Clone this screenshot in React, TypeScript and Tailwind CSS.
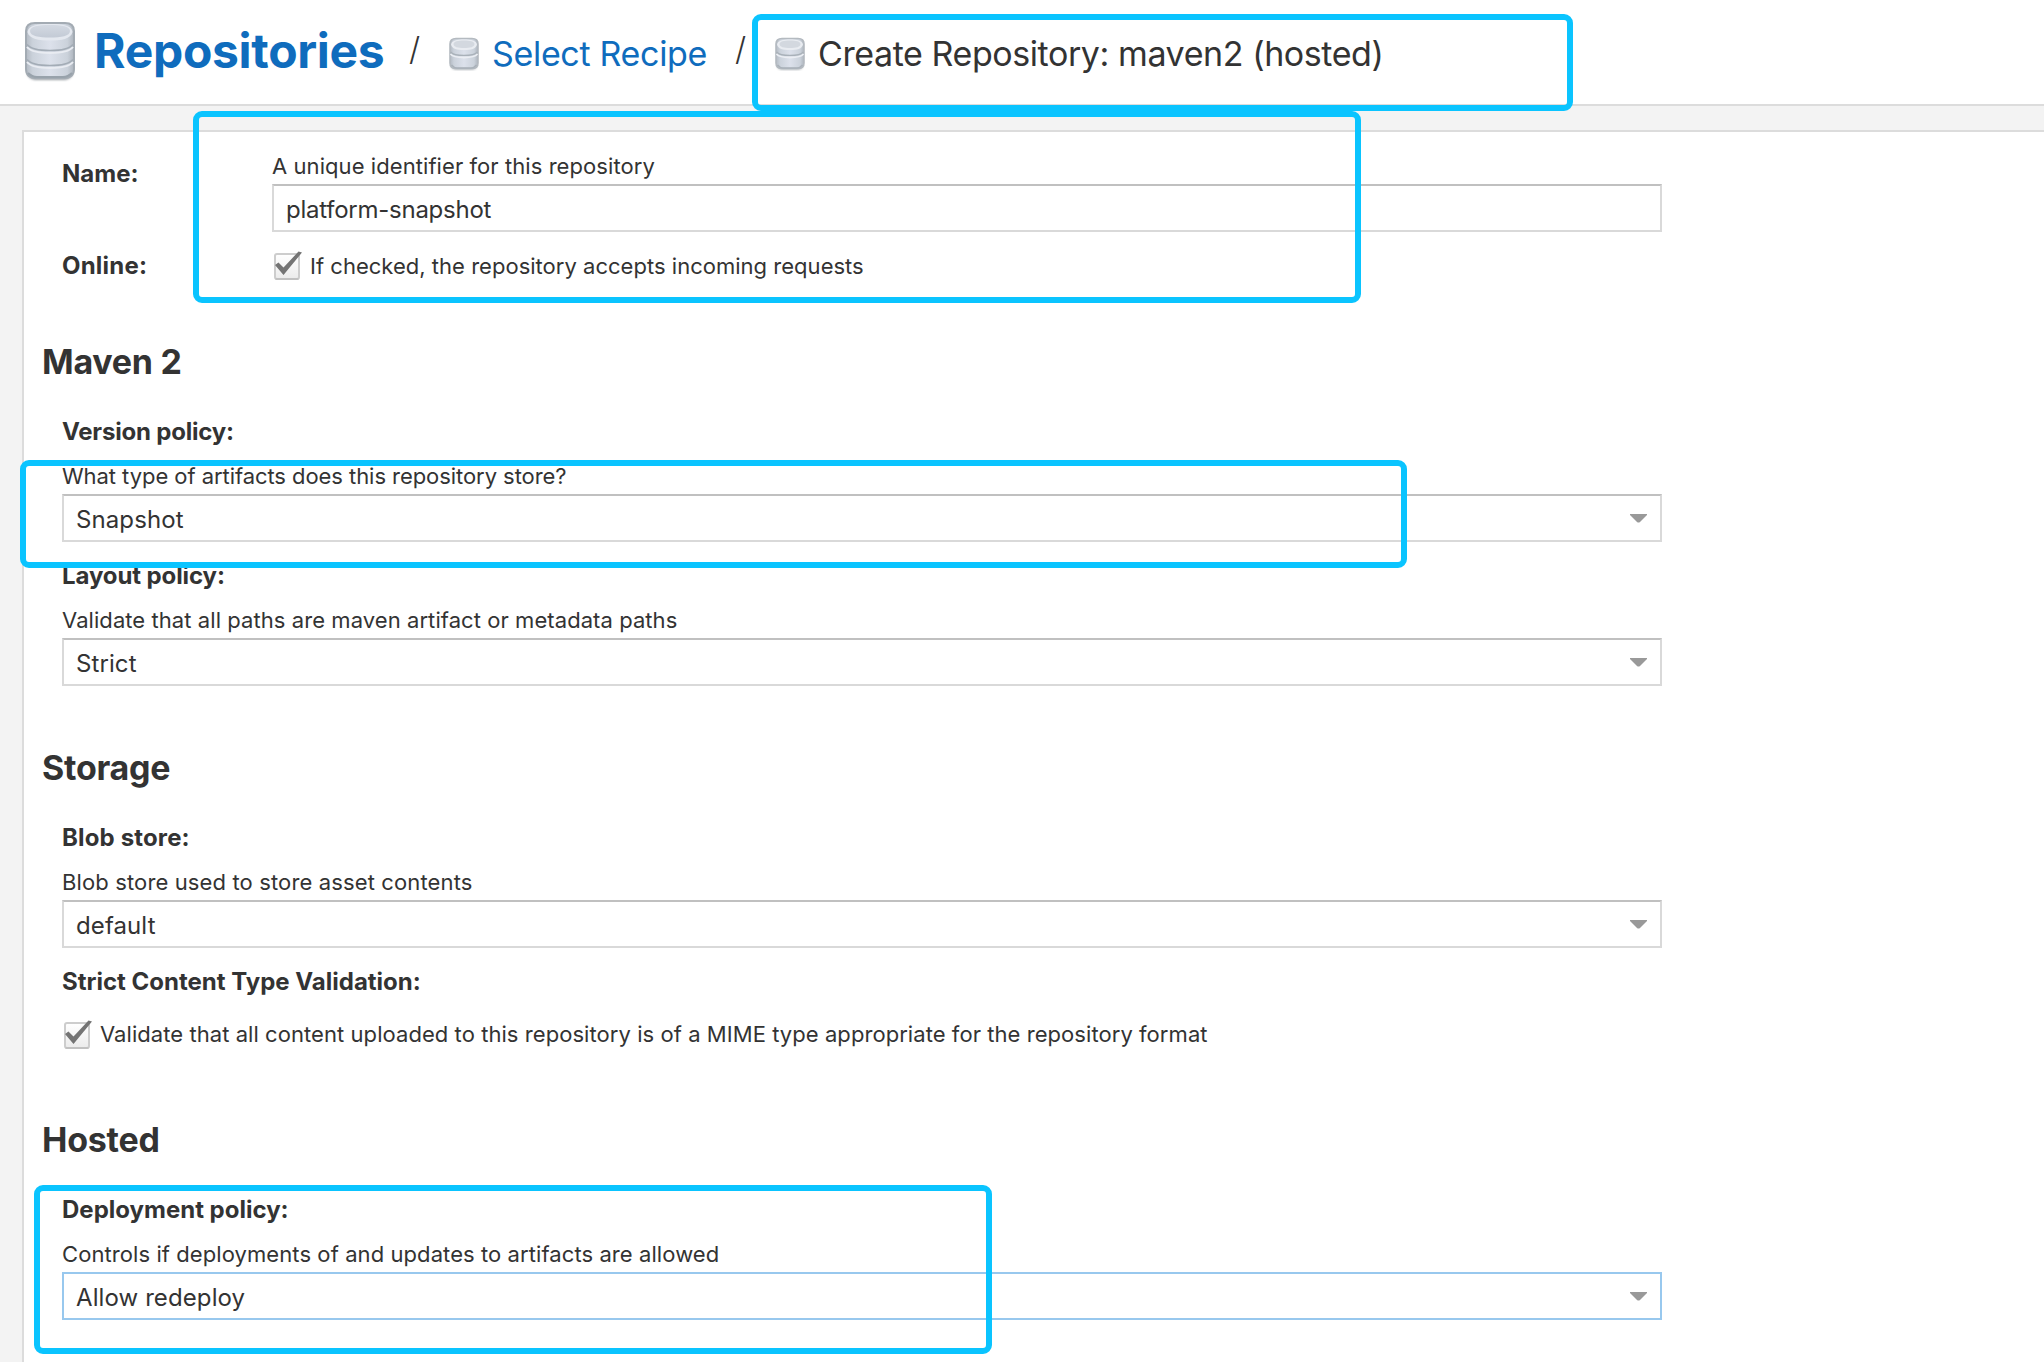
import type { ReactNode } from 'react';

function DatabaseLarge() {
  return (
    <svg className="ml-6 mt-5 h-[62px] w-[52px] shrink-0" viewBox="0 0 52 62" fill="none">
      <defs>
        <linearGradient id="dbBody" x1="0" x2="1" y1="0" y2="0">
          <stop offset="0" stopColor="#b3bac3" />
          <stop offset="0.14" stopColor="#cbd2db" />
          <stop offset="0.5" stopColor="#dce1eb" />
          <stop offset="0.86" stopColor="#cbd2db" />
          <stop offset="1" stopColor="#aeb5be" />
        </linearGradient>
        <linearGradient id="dbTop" x1="0" x2="0" y1="0" y2="1">
          <stop offset="0" stopColor="#d3d9e2" />
          <stop offset="1" stopColor="#c3cad5" />
        </linearGradient>
        <filter id="dbShadow" x="-20%" y="-20%" width="140%" height="150%">
          <feGaussianBlur stdDeviation="1.3" />
        </filter>
      </defs>
      <path d="M3 51q0 8 8 9h30q8-1 8-9z" fill="#6f7780" opacity="0.7" filter="url(#dbShadow)" />
      <path d="M2 11Q2 3 11 3H41Q50 3 50 11V49Q50 58 40 58H12Q2 58 2 49Z" fill="url(#dbBody)" stroke="#a3abb3" strokeWidth="2" />
      <path d="M3.500 12C5 19 15 20.500 26 20.500S47 19 48.500 12C48 5 38 4 26 4S4 5 3.500 12Z" fill="#e4e8ef" />
      <path d="M6 11C6 16 15 17.500 26 17.500S46 16 46 11C46 6.500 38 5 26 5S6 6.500 6 11Z" fill="url(#dbTop)" />
      <path d="M3 24.500C7 29.500 15 30.500 26 30.500S45 29.500 49 24.500" stroke="#a3acb6" strokeWidth="1.600" />
      <path d="M3 27C7 32 15 33 26 33S45 32 49 27" stroke="#e9ecf2" strokeWidth="2" />
      <path d="M3 39.500C7 44.500 15 45.500 26 45.500S45 44.500 49 39.500" stroke="#a3acb6" strokeWidth="1.600" />
      <path d="M3 42C7 47 15 48 26 48S45 47 49 42" stroke="#e9ecf2" strokeWidth="2" />
      <path d="M4 53Q8 57 13 57H39Q44 57 48 53" stroke="#98a2ab" strokeWidth="2" />
    </svg>
  );
}

function DatabaseSmall() {
  return (
    <svg className="mt-[37px] h-[34px] w-[30px] shrink-0" viewBox="0 0 30 34" fill="none">
      <path d="M2 28q0 4.500 5 5h16q5-.5 5-5z" fill="#8d949b" opacity="0.6" filter="url(#dbShadow)" />
      <path d="M1 7Q1 1.500 7 1.500H23Q29 1.500 29 7V26Q29 31.500 23 31.500H7Q1 31.500 1 26Z" fill="url(#dbBody)" stroke="#b4bac0" strokeWidth="1.600" />
      <path d="M2 7.500C3 12 8 13 15 13S27 12 28 7.500C27.500 3.500 22 2.500 15 2.500S2.500 3.500 2 7.500Z" fill="#e9ecf1" />
      <path d="M4.500 7C4.500 10 9 11 15 11S25.500 10 25.500 7C25.500 4.500 21 3.500 15 3.500S4.500 4.500 4.500 7Z" fill="#d3d8df" />
      <path d="M1.500 15C4 18 9 18.500 15 18.500S26 18 28.500 15" stroke="#a9b1b9" strokeWidth="1.500" />
      <path d="M1.500 17C4 20 9 20.500 15 20.500S26 20 28.500 17" stroke="#ebeef3" strokeWidth="1.800" />
      <path d="M2.500 28Q5 31 8 31H22Q25 31 27.500 28" stroke="#a9b1b9" strokeWidth="1.500" />
    </svg>
  );
}

function Checkbox() {
  return (
    <svg className="ml-px mt-[2px] h-[30px] w-[30px] shrink-0" viewBox="0 0 30 30" fill="none">
      <defs>
        <linearGradient id="cbFill" x1="0" x2="0" y1="0" y2="1">
          <stop offset="0" stopColor="#ffffff" />
          <stop offset="1" stopColor="#ebebeb" />
        </linearGradient>
      </defs>
      <rect x="2" y="3" width="24" height="25" rx="2" fill="url(#cbFill)" stroke="#cdcdcd" strokeWidth="2" />
      <path d="M3 28H25" stroke="#bdbdbd" strokeWidth="1.500" strokeLinecap="round" />
      <path d="M2 14L5.500 11.500L10.500 16.500L25.500 0.500L29 1.500L10.500 24Z" fill="#747474" />
    </svg>
  );
}

function Arrow() {
  return (
    <svg className="mr-[13px] h-[9px] w-[17px]" viewBox="0 0 17 9">
      <path d="M0 0H17V1L10 8Q8.500 9.200 7 8L0 1Z" fill="#999999" />
    </svg>
  );
}

function Slash({ className }: { className: string }) {
  return <span className={`mt-[31px] text-[32px] font-light leading-9 ${className}`}>/</span>;
}

function Heading({ children, className }: { children: ReactNode; className: string }) {
  return <h2 className={`pl-[18px] text-[34px] font-bold leading-10 tracking-[-0.25px] ${className}`}>{children}</h2>;
}

function Label({ children, className = '' }: { children: ReactNode; className?: string }) {
  return <div className={`text-2xl font-bold leading-8 ${className}`}>{children}</div>;
}

function Help({ children, className = 'tracking-[0.07px]' }: { children: ReactNode; className?: string }) {
  return <div className={`text-[22px] leading-8 ${className}`}>{children}</div>;
}

function Select({ value, focused = false }: { value: string; focused?: boolean }) {
  return (
    <div
      className={`mt-[2px] flex h-12 w-[1600px] items-center justify-between border-2 pl-3 text-2xl tracking-[0.1px] ${
        focused ? 'border-[#98c8ee]' : 'border-[#d9d9d9] border-t-[#c0c0c0]'
      }`}
    >
      <span className="pt-1 leading-8">{value}</span>
      <Arrow />
    </div>
  );
}

type FieldProps = {
  label: string;
  labelClass?: string;
  help: string;
  helpClass?: string;
  value: string;
  focused?: boolean;
};

function Field({ label, labelClass = '', help, helpClass, value, focused }: FieldProps) {
  return (
    <div>
      <Label className={`mb-3 ${labelClass}`}>{label}</Label>
      <Help className={helpClass}>{help}</Help>
      <Select value={value} focused={focused} />
    </div>
  );
}

function Highlight({ className }: { className: string }) {
  return <div className={`absolute rounded-[9px] border-6 border-[#0ac4ff] ${className}`} />;
}

export default function App() {
  return (
    <div className="relative flex h-[1362px] w-[2044px] flex-col overflow-hidden bg-[#f3f3f3] font-['Inter',sans-serif] text-[#333333]">
      <header className="flex h-[106px] shrink-0 items-start whitespace-nowrap border-b-2 border-[#dcdcdc] bg-white">
        <DatabaseLarge />
        <h1 className="ml-[18px] mt-[23px] w-[315px] text-5xl font-bold leading-[56px] tracking-[-0.3px] text-[#0f6cbd]">Repositories</h1>
        <Slash className="w-10" />
        <DatabaseSmall />
        <a className="ml-[13px] mt-[34px] w-[243px] text-[34px] leading-10 tracking-[-0.33px] text-[#0f6cbd]">Select Recipe</a>
        <Slash className="w-10" />
        <DatabaseSmall />
        <span className="ml-[13px] mt-[34px] text-[34px] leading-10 tracking-[-0.42px]">Create Repository: maven2 (hosted)</span>
      </header>

      <main className="ml-[22px] mt-6 flex-1 border-l-2 border-t-2 border-[#dcdcdc] bg-white">
        <div className="grid grid-cols-[210px_1390px] pl-[38px] pt-[18px]">
          <Label className="mt-2">Name:</Label>
          <div>
            <Help>A unique identifier for this repository</Help>
            <div className="mt-[2px] flex h-12 items-center border-2 border-[#d9d9d9] border-t-[#c0c0c0] pl-3 text-2xl tracking-[-0.25px]">
              <span className="pt-1 leading-8">platform-snapshot</span>
            </div>
          </div>
          <Label className="mt-[18px] tracking-[0.2px]">Online:</Label>
          <div className="mt-[17px] flex gap-[7px]">
            <Checkbox />
            <Help className="pt-px tracking-[0.02px]">If checked, the repository accepts incoming requests</Help>
          </div>
        </div>

        <Heading className="mt-[60px]">Maven 2</Heading>
        <div className="mt-[34px] flex flex-col gap-[18px] pl-[38px]">
          <Field
            label="Version policy:"
            labelClass="tracking-[-0.2px]"
            help="What type of artifacts does this repository store?"
            helpClass="tracking-[-0.06px]"
            value="Snapshot"
          />
          <Field label="Layout policy:" labelClass="tracking-[-0.1px]" help="Validate that all paths are maven artifact or metadata paths" value="Strict" />
        </div>

        <Heading className="mt-[62px]">Storage</Heading>
        <div className="mt-[34px] flex flex-col gap-[18px] pl-[38px]">
          <Field
            label="Blob store:"
            labelClass="tracking-[0.15px]"
            help="Blob store used to store asset contents"
            helpClass="tracking-[0.13px]"
            value="default"
          />
          <div>
            <Label>Strict Content Type Validation:</Label>
            <div className="mt-5 flex gap-[7px]">
              <Checkbox />
              <Help className="tracking-[0.06px]">
                Validate that all content uploaded to this repository is of a MIME type appropriate for the repository format
              </Help>
            </div>
          </div>
        </div>

        <Heading className="mt-[70px]">Hosted</Heading>
        <div className="mt-[34px] pl-[38px]">
          <Field
            label="Deployment policy:"
            help="Controls if deployments of and updates to artifacts are allowed"
            helpClass="tracking-[0.08px]"
            value="Allow redeploy"
            focused
          />
        </div>
      </main>

      <Highlight className="left-[752px] top-[14px] h-[97px] w-[821px]" />
      <Highlight className="left-[193px] top-[111px] h-[192px] w-[1168px]" />
      <Highlight className="left-5 top-[460px] h-[108px] w-[1387px]" />
      <Highlight className="left-[34px] top-[1185px] h-[169px] w-[958px]" />
    </div>
  );
}
